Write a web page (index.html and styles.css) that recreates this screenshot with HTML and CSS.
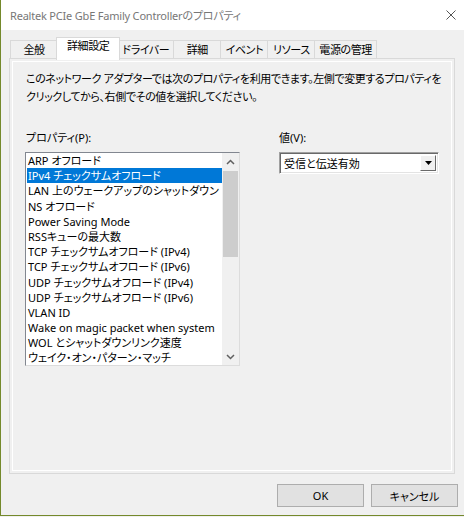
FILE: index.html
```html
<!DOCTYPE html>
<html lang="ja">
<head>
    <meta charset="UTF-8">
    <meta name="viewport" content="width=device-width, initial-scale=1.0">
    <title>Realtek PCIe GbE Family Controllerのプロパティ</title>
    <link rel="stylesheet" href="styles.css">
</head>
<body>
    <div class="window">
        <div class="titlebar">
            <span class="title">Realtek PCIe GbE Family Controllerのプロパティ</span>
            <svg class="close" width="10" height="10" viewBox="0 0 10 10">
                <path d="M0.5 0.5L9.5 9.5M9.5 0.5L0.5 9.5" stroke="#555" stroke-width="1"/>
            </svg>
        </div>
        <div class="sheet">
            <div class="tabs">
                <div class="tab first">全般</div>
                <div class="tab active">詳細設定</div>
                <div class="tab">ドライバー</div>
                <div class="tab">詳細</div>
                <div class="tab">イベント</div>
                <div class="tab">リソース</div>
                <div class="tab">電源の管理</div>
            </div>
            <div class="panel">
                <div class="page">
                    <p class="desc">このネットワーク アダプターでは次のプロパティを利用できます。左側で変更するプロパティを<br>クリックしてから、右側でその値を選択してください。</p>
                    <div class="fields">
                        <div class="field-left">
                            <div class="label">プロパティ(P):</div>
                            <div class="listbox">
                                <ul class="items">
                                    <li>ARP オフロード</li>
                                    <li class="selected">IPv4 チェックサムオフロード</li>
                                    <li>LAN 上のウェークアップのシャットダウン</li>
                                    <li>NS オフロード</li>
                                    <li>Power Saving Mode</li>
                                    <li>RSSキューの最大数</li>
                                    <li>TCP チェックサムオフロード (IPv4)</li>
                                    <li>TCP チェックサムオフロード (IPv6)</li>
                                    <li>UDP チェックサムオフロード (IPv4)</li>
                                    <li>UDP チェックサムオフロード (IPv6)</li>
                                    <li>VLAN ID</li>
                                    <li>Wake on magic packet when system</li>
                                    <li>WOL とシャットダウンリンク速度</li>
                                    <li>ウェイク・オン・パターン・マッチ</li>
                                </ul>
                                <div class="scrollbar">
                                    <div class="arrow">
                                        <svg width="9" height="6" viewBox="0 0 9 6"><path d="M1 5L4.5 1.5L8 5" fill="none" stroke="#606060" stroke-width="1.5"/></svg>
                                    </div>
                                    <div class="track"><div class="thumb"></div></div>
                                    <div class="arrow">
                                        <svg width="9" height="6" viewBox="0 0 9 6"><path d="M1 1L4.5 4.5L8 1" fill="none" stroke="#606060" stroke-width="1.5"/></svg>
                                    </div>
                                </div>
                            </div>
                        </div>
                        <div class="field-right">
                            <div class="label">値(V):</div>
                            <div class="combo">
                                <span class="combo-value">受信と伝送有効</span>
                                <div class="combo-btn">
                                    <svg width="7" height="4" viewBox="0 0 7 4"><path d="M0 0H7L3.5 4Z" fill="#000"/></svg>
                                </div>
                            </div>
                        </div>
                    </div>
                </div>
            </div>
            <div class="buttons">
                <button type="button">OK</button>
                <button type="button">キャンセル</button>
            </div>
        </div>
    </div>
</body>
</html>
```

FILE: styles.css
```css
* {
    box-sizing: border-box;
}
body {
    margin: 0;
    background-color: #f0f0f0;
    font-family: "Noto Sans", "Noto Sans CJK JP", sans-serif;
    font-size: 11px;
    font-feature-settings: "palt";
    color: #000;
}
.window {
    width: 464px;
    height: 516px;
    border-left: 1px solid #74892b;
    border-bottom: 1px solid #74892b;
    background-color: #f0f0f0;
    display: flex;
    flex-direction: column;
}
.titlebar {
    height: 30px;
    background-color: #fff;
    display: flex;
    align-items: center;
    justify-content: space-between;
    padding: 0 8px 0 9px;
    color: #777;
}
.title {
    letter-spacing: -0.2px;
}
.sheet {
    flex: 1;
    padding: 7px 9px 0 8px;
    display: flex;
    flex-direction: column;
}
.tabs {
    display: flex;
    align-items: flex-end;
    height: 21px;
    padding-left: 1px;
    position: relative;
    z-index: 1;
}
.tab {
    height: 18px;
    min-width: 48px;
    padding: 0 4px;
    margin-left: -1px;
    border: 1px solid #d9d9d9;
    border-bottom: none;
    background-color: #f0f0f0;
    text-align: center;
    line-height: 17px;
    letter-spacing: -0.4px;
    white-space: nowrap;
}
.tab.first {
    margin-left: 0;
}
.tab.active {
    height: 23px;
    margin: 0 -2px -2px -2px;
    padding: 0 10px;
    background-color: #fff;
    line-height: 16px;
    position: relative;
    z-index: 2;
}
.panel {
    height: 416px;
    border: 1px solid #d9d9d9;
    padding: 2px;
}
.page {
    height: 100%;
    border: 1px solid #fff;
    padding: 8px 12px 0 12px;
}
.desc {
    margin: 0 0 0 1px;
    line-height: 18px;
    letter-spacing: -0.4px;
    white-space: nowrap;
}
.fields {
    display: flex;
    margin-top: 24px;
    gap: 38px;
}
.label {
    line-height: 16px;
    padding-left: 1px;
    margin-bottom: 6px;
}
.field-left {
    width: 216px;
}
.listbox {
    height: 214px;
    display: flex;
    background-color: #fff;
    border: 1px solid #828790;
    border-right-color: #dcdcdc;
    border-bottom-color: #dcdcdc;
}
.items {
    flex: 1;
    list-style: none;
    margin: 0;
    padding: 0 0 0 1px;
    overflow: hidden;
}
.items li {
    line-height: 15.2px;
    height: 15.2px;
    padding-left: 1px;
    white-space: nowrap;
    overflow: hidden;
}
.items li.selected {
    background-color: #0078d7;
    color: #fff;
}
.scrollbar {
    width: 17px;
    background-color: #f0f0f0;
    display: flex;
    flex-direction: column;
}
.arrow {
    height: 17px;
    display: flex;
    align-items: center;
    justify-content: center;
}
.track {
    flex: 1;
    padding: 1px 1px 0 1px;
}
.thumb {
    height: 86px;
    background-color: #cdcdcd;
}
.combo {
    width: 160px;
    height: 22px;
    margin-left: 1px;
    display: flex;
    align-items: center;
    justify-content: space-between;
    background-color: #fff;
    border: 1px solid #a0a0a0;
    border-right-color: #fff;
    border-bottom-color: #fff;
    box-shadow: inset 1px 1px 0 #696969, inset -1px -1px 0 #e3e3e3;
    padding: 0 2px 0 4px;
}
.combo-btn {
    width: 16px;
    height: 16px;
    display: flex;
    align-items: center;
    justify-content: center;
    background-color: #f0f0f0;
    border: 1px solid #fff;
    border-right-color: #696969;
    border-bottom-color: #696969;
}
.buttons {
    display: flex;
    justify-content: flex-end;
    gap: 7px;
    margin: 10px -3px 0 0;
}
button {
    width: 87px;
    height: 23px;
    background-color: #e1e1e1;
    border: 1px solid #adadad;
    font-family: inherit;
    font-size: 11px;
    font-feature-settings: "palt";
    color: #000;
    padding: 0;
}
```
